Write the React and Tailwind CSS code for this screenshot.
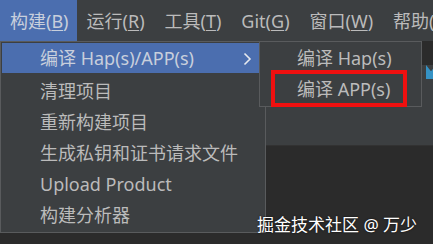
import React from 'react'

const menus = [
  ['构建', 'B'],
  ['运行', 'R'],
  ['工具', 'T'],
  ['Git', 'G'],
  ['窗口', 'W'],
]

const items = ['清理项目', '重新构建项目', '生成私钥和证书请求文件', 'Upload Product', '构建分析器']

export default function App() {
  return (
    <div className="relative w-[433px] h-[244px] overflow-hidden bg-[#2b2b2b] text-[18px] text-[#bbbbbb] font-['Noto_Sans','Noto_Sans_CJK_SC',sans-serif]">
      {/* menu bar */}
      <div className="flex h-[41px] items-center bg-[#3c3f41] leading-none whitespace-nowrap">
        {menus.map(([label, key], i) => (
          <div
            key={key}
            className={
              i === 0
                ? 'flex h-full items-center bg-[#4b6eaf] pl-[10px] pr-[8px] text-[#c8cfdc]'
                : 'flex h-full items-center px-[10px]'
            }
          >
            <span>
              {label}(<span className="underline underline-offset-2">{key}</span>)
            </span>
          </div>
        ))}
        <div className="flex h-full items-center pl-[10px]">
          <span>帮助(H)</span>
        </div>
      </div>

      {/* toolbar strip behind the menus */}
      <div className="h-[81px] border-b border-[#323232] bg-[#3c3f41]">
        <div className="ml-[426px] mt-[24px] h-[14px] w-[10px] bg-[#3592c4] [clip-path:polygon(0_0,50%_45%,100%_0,100%_100%,0_100%)]" />
      </div>

      {/* build dropdown */}
      <div className="absolute left-0 top-[41px] w-[266px] border border-[#595b5d] bg-[#3c3f41] pt-[1px] pb-[1px] pl-[1px] pr-[3px]">
        <div className="mb-[3px] flex h-[30px] items-center justify-between bg-[#4b6eaf] pl-[38px] pr-[10px] text-[#c8cfdc]">
          <span>编译 Hap(s)/APP(s)</span>
          <svg width="9" height="14" viewBox="0 0 9 14" className="mt-[1px]">
            <path d="M1.5 1.5 L7 7 L1.5 12.5" fill="none" stroke="#e6e9ef" strokeWidth="1.6" />
          </svg>
        </div>
        {items.map(t => (
          <div key={t} className="flex h-[31px] items-center pl-[38px] whitespace-nowrap">
            {t}
          </div>
        ))}
      </div>

      {/* sub menu */}
      <div className="absolute left-[259px] top-[41px] w-[163px] border border-[#595b5d] bg-[#3c3f41] py-[1px]">
        <div className="flex h-[31px] items-center pl-[37px]">编译 Hap(s)</div>
        <div className="flex h-[31px] items-center pl-[37px]">编译 APP(s)</div>
      </div>
      <div className="absolute left-[271px] top-[70px] h-[37px] w-[136px] border-4 border-[#f01010]" />

      {/* watermark */}
      <div className="absolute left-[257px] top-[213px] text-[17px] leading-[24px] text-white [text-shadow:0_0_2px_rgba(0,0,0,0.8)] whitespace-nowrap">
        掘金技术社区 @ 万少
      </div>
    </div>
  )
}
